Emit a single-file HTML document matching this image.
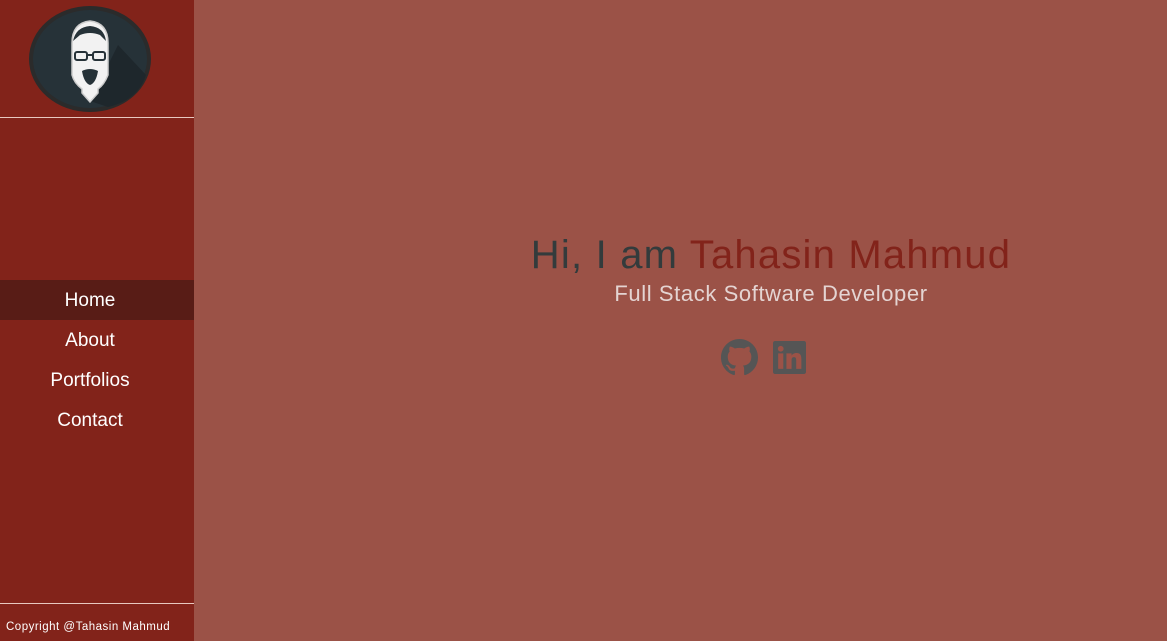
<!DOCTYPE html>
<html><head><style>
html,body{margin:0;padding:0;width:1167px;height:641px;overflow:hidden;font-family:"Liberation Sans",sans-serif}
.side{position:absolute;left:0;top:0;width:194px;height:641px;background:#82231a}
.main{position:absolute;left:194px;top:0;width:973px;height:641px;background:#9b5247}
.hr{position:absolute;left:0;width:194px;height:1px;background:#e8c8c0}
.nav{position:absolute;left:0;width:194px;height:40px;line-height:42px;text-align:center;color:#fff;font-size:19px}
.nav span{position:relative;left:-7px}
.t{position:absolute;left:471px;width:600px;text-align:center;white-space:nowrap}
</style></head><body>
<div class="side">
 <svg style="position:absolute;left:28px;top:5px" width="124" height="108" viewBox="0 0 124 108">
  <ellipse cx="62" cy="54" rx="61" ry="53" fill="#2b2b2b"/>
  <ellipse cx="62" cy="54" rx="57" ry="49" fill="#263238"/>
  <path d="M90 40 L118 70 Q110 95 80 102 L62 96 Z" fill="#1e272c"/>
  <path d="M44 38 Q44 18 62 16 Q80 18 80 38 L80 70 Q76 80 70 84 L70 88 L62 97 L54 88 L54 84 Q46 78 44 70 Z" fill="#f2f2f2" stroke="#ccc" stroke-width="1.5"/>
  <path d="M45 36 Q48 22 62 21 Q76 22 78 36 L72 30 Q62 26 52 30 Z" fill="#263238"/>
  <rect x="47" y="47" width="12" height="8" rx="2" fill="none" stroke="#263238" stroke-width="2"/>
  <rect x="65" y="47" width="12" height="8" rx="2" fill="none" stroke="#263238" stroke-width="2"/>
  <path d="M59 50 H65" stroke="#263238" stroke-width="2"/>
  <path d="M54 66 Q62 62 70 66 Q68 78 62 80 Q56 78 54 66 Z" fill="#263238"/>
 </svg>
 <div class="hr" style="top:117px"></div>
 <div class="nav" style="top:280px;background:#581c16"><span>Home</span></div>
 <div class="nav" style="top:320px"><span>About</span></div>
 <div class="nav" style="top:360px"><span>Portfolios</span></div>
 <div class="nav" style="top:400px"><span>Contact</span></div>
 <div class="hr" style="top:603px"></div>
 <div style="position:absolute;left:6px;top:621px;color:#fff;font-size:11.5px;letter-spacing:0.5px">Copyright @Tahasin Mahmud</div>
</div>
<div class="main"></div>
<div class="t" style="top:233px;font-size:40px;letter-spacing:1.2px;color:#333b3c">Hi, I am <span style="color:#82231a">Tahasin Mahmud</span></div>
<div class="t" style="top:281px;font-size:22px;letter-spacing:0.6px;color:#e4d4d2">Full Stack Software Developer</div>
<svg style="position:absolute;left:721px;top:339px" width="37" height="37" viewBox="0 0 16 16"><path fill="#555" d="M8 0C3.58 0 0 3.58 0 8c0 3.54 2.29 6.53 5.47 7.59.4.07.55-.17.55-.38 0-.19-.01-.82-.01-1.49-2.01.37-2.530-.49-2.69-.94-.09-.23-.48-.94-.82-1.13-.28-.15-.68-.52-.01-.53.63-.01 1.08.58 1.23.82.72 1.21 1.87.87 2.33.66.07-.52.28-.87.51-1.07-1.78-.2-3.64-.89-3.64-3.95 0-.87.31-1.59.82-2.15-.08-.2-.36-1.02.08-2.12 0 0 .67-.21 2.2.82.64-.18 1.32-.27 2-.27.68 0 1.36.09 2 .27 1.53-1.04 2.2-.82 2.2-.82.44 1.1.16 1.92.08 2.12.51.56.82 1.27.82 2.15 0 3.07-1.87 3.75-3.65 3.95.29.25.54.73.54 1.48 0 1.07-.01 1.93-.01 2.2 0 .21.15.46.55.38A8.013 8.013 0 0016 8c0-4.42-3.58-8-8-8z"/></svg>
<svg style="position:absolute;left:773px;top:341px" width="33" height="33" viewBox="0 0 32 32"><rect width="32" height="32" rx="2" fill="#555"/><rect x="5" y="12" width="5" height="15" fill="#9b5247"/><circle cx="7.5" cy="7.5" r="2.8" fill="#9b5247"/><path d="M13 12h5v2.2c.8-1.4 2.4-2.6 4.8-2.6 4 0 4.7 2.6 4.7 6V27h-5v-8c0-1.8-.2-3.4-2.2-3.4S18 17 18 19v8h-5z" fill="#9b5247"/></svg>
</body></html>
